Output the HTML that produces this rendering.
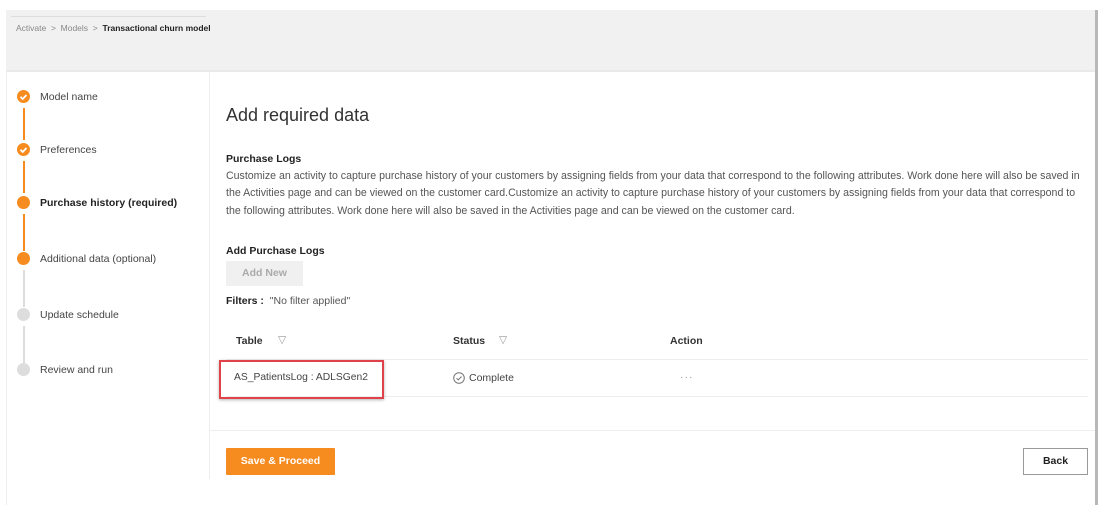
<!DOCTYPE html>
<html><head><style>
*{margin:0;padding:0;box-sizing:border-box}
body{width:1108px;height:526px;background:#fff;font-family:"Liberation Sans",sans-serif;position:relative;overflow:hidden;color:#323130}
.frame{position:absolute;left:6px;top:10px;width:1092px;height:495px;border-left:1px solid #eee;border-right:3px solid #b8b8b8;}
.hdr{position:absolute;left:6px;top:10px;width:1089px;height:62px;background:#f1f1f1;border-bottom:2px solid #eaeaea}
.hdr .line{position:absolute;left:5px;top:6px;width:195px;border-top:1px solid #ddd}
.bc{position:absolute;left:16px;top:23px;font-size:8.5px;color:#888}
.bc b{color:#222}
.side{position:absolute;left:209px;top:72px;height:407px;border-left:1px solid #eee}
.step{position:absolute;left:40px;font-size:10.5px;color:#444}
.dot{position:absolute;left:17px;width:13px;height:13px;border-radius:50%}
.or{background:#f68b1f}.gr{background:#ddd}
.vl{position:absolute;left:23px;width:1.5px}
.t{position:absolute;font-size:10.5px}
</style></head><body>
<div class="frame"></div>
<div class="hdr"><div class="line"></div></div>
<div class="bc">Activate &nbsp;&gt;&nbsp; Models &nbsp;&gt;&nbsp; <b>Transactional churn model</b></div>
<div class="side"></div>

<div class="vl" style="top:108px;height:32px;background:#f68b1f"></div>
<div class="vl" style="top:161px;height:32px;background:#f68b1f"></div>
<div class="vl" style="top:214px;height:37px;background:#f68b1f"></div>
<div class="vl" style="top:270px;height:37px;background:#ddd"></div>
<div class="vl" style="top:326px;height:37px;background:#ddd"></div>
<svg style="position:absolute;left:17px;top:90px" width="13" height="13"><circle cx="6.5" cy="6.5" r="6.5" fill="#f68b1f"/><path d="M3.5 6.8l2.2 2.2 3.8-4" stroke="#fff" stroke-width="1.8" fill="none"/></svg>
<svg style="position:absolute;left:17px;top:143px" width="13" height="13"><circle cx="6.5" cy="6.5" r="6.5" fill="#f68b1f"/><path d="M3.5 6.8l2.2 2.2 3.8-4" stroke="#fff" stroke-width="1.8" fill="none"/></svg>
<div class="dot or" style="top:196px"></div>
<div class="dot or" style="top:252px"></div>
<div class="dot gr" style="top:308px"></div>
<div class="dot gr" style="top:363px"></div>
<div class="step" style="top:91px">Model name</div>
<div class="step" style="top:144px">Preferences</div>
<div class="step" style="top:197px;font-weight:bold;color:#222">Purchase history (required)</div>
<div class="step" style="top:253px">Additional data (optional)</div>
<div class="step" style="top:309px">Update schedule</div>
<div class="step" style="top:364px">Review and run</div>

<div class="t" style="left:226px;top:105px;font-size:18px;color:#333">Add required data</div>
<div class="t" style="left:226px;top:153px;font-weight:bold;color:#222">Purchase Logs</div>
<div class="t" style="left:226px;top:168px;white-space:nowrap;line-height:17.3px;color:#555;font-size:10.6px">Customize an activity to capture purchase history of your customers by assigning fields from your data that correspond to the following attributes. Work done here will also be saved in<br>the Activities page and can be viewed on the customer card.Customize an activity to capture purchase history of your customers by assigning fields from your data that correspond to<br>the following attributes. Work done here will also be saved in the Activities page and can be viewed on the customer card.</div>
<div class="t" style="left:226px;top:245px;font-weight:bold;color:#222">Add Purchase Logs</div>
<div style="position:absolute;left:226px;top:261px;width:77px;height:25px;background:#f0f0f0;color:#aaa;font-size:10.5px;font-weight:bold;text-align:center;line-height:25px">Add New</div>
<div class="t" style="left:226px;top:295px;color:#555"><b style="color:#222">Filters :</b>&nbsp; "No filter applied"</div>

<div class="t" style="left:236px;top:335px;font-weight:bold;color:#333">Table</div>
<div class="t" style="left:278px;top:334px;color:#999">▽</div>
<div class="t" style="left:453px;top:335px;font-weight:bold;color:#333">Status</div>
<div class="t" style="left:499px;top:334px;color:#999">▽</div>
<div class="t" style="left:670px;top:335px;font-weight:bold;color:#333">Action</div>
<div style="position:absolute;left:226px;top:359px;width:862px;border-top:1px solid #eee"></div>
<div style="position:absolute;left:226px;top:396px;width:862px;border-top:1px solid #eee"></div>
<div style="position:absolute;left:210px;top:430px;width:885px;border-top:1px solid #eee"></div>
<div style="position:absolute;left:219px;top:360px;width:165px;height:39px;border:2px solid #e0424a;box-shadow:0 1px 3px rgba(0,0,0,.3)"></div>
<div class="t" style="left:234px;top:372px;color:#444;font-size:10.3px">AS_PatientsLog : ADLSGen2</div>
<svg style="position:absolute;left:453px;top:372px" width="12" height="12"><circle cx="6" cy="6" r="5.3" stroke="#777" fill="none"/><path d="M3.5 6.2l1.7 1.7 3.3-3.4" stroke="#777" fill="none"/></svg>
<div class="t" style="left:469px;top:372px;color:#444">Complete</div>
<div class="t" style="left:680px;top:371px;color:#999;letter-spacing:1px">···</div>

<div style="position:absolute;left:226px;top:448px;width:109px;height:27px;background:#f68b1f;color:#fff;font-size:10.5px;font-weight:bold;text-align:center;line-height:27px;border-radius:1px">Save &amp; Proceed</div>
<div style="position:absolute;left:1023px;top:448px;width:65px;height:27px;border:1px solid #999;color:#222;font-size:10.5px;font-weight:bold;text-align:center;line-height:25px">Back</div>
</body></html>
